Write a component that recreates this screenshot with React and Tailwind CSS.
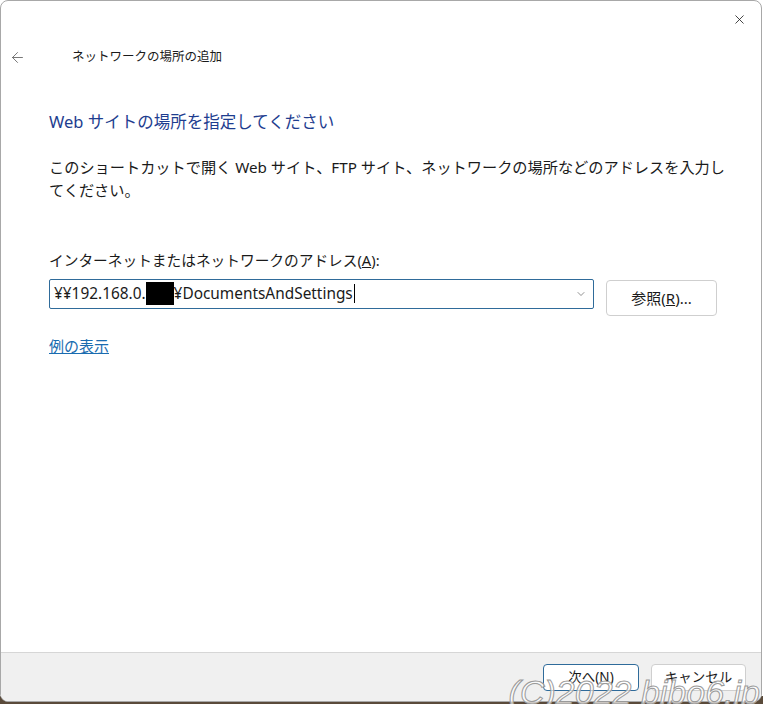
import { X, ArrowLeft, ChevronDown } from 'lucide-react';

const font = "font-['Segoe_UI','Noto_Sans','Noto_Sans_CJK_JP',sans-serif]";

const App = () => {
  return (
    <div className={`relative w-[763px] h-[704px] bg-white overflow-hidden ${font}`}>
      <div className="absolute left-0 right-0 bottom-0 h-[8px] bg-[#5a4a3a]" />
      <div className="relative w-[762px] h-[702px] border border-[#a8a8a8] rounded-[8px] overflow-hidden flex flex-col bg-white">
        {/* title bar */}
        <div className="h-[37px] flex justify-end items-center pr-[14px]">
          <X size={15} strokeWidth={1.3} className="text-[#1a1a1a]" />
        </div>
        <div className="h-[38px] flex items-center">
          <ArrowLeft size={17} strokeWidth={1.2} className="ml-[8px] text-[#606060]" />
          <span className="ml-[46px] text-[12.5px] text-[#1a1a1a]">ネットワークの場所の追加</span>
        </div>

        {/* content */}
        <div className="flex-1 pl-[48px]">
          <h1 className="mt-[34px] text-[16.5px] leading-[24px] text-[#1e3d8f]">Web サイトの場所を指定してください</h1>
          <p className="mt-[22px] text-[15.2px] leading-[23px] text-[#1a1a1a] whitespace-nowrap">
            このショートカットで開く Web サイト、FTP サイト、ネットワークの場所などのアドレスを入力し
            <br />
            てください。
          </p>
          <div className="mt-[48px] text-[14.7px] leading-[20px] text-[#1a1a1a]">
            インターネットまたはネットワークのアドレス(<span className="underline">A</span>):
          </div>
          <div className="mt-[9px] flex items-start">
            <div className="w-[545px] h-[30px] border border-[#2f6b9a] rounded-[2px] flex items-center pl-[4px] pr-[6px]">
              <span className="text-[15.4px] text-[#1a1a1a] whitespace-nowrap flex items-center">
                ¥¥192.168.0.
                <span className="inline-block w-[28px] h-[23px] bg-black" />
                ¥DocumentsAndSettings
                <span className="inline-block w-px h-[19px] bg-black ml-[1px]" />
              </span>
              <ChevronDown size={12} strokeWidth={1.3} className="ml-auto text-[#555]" />
            </div>
            <button className="ml-[12px] mt-[1px] w-[111px] h-[36px] bg-white border border-[#cfcfcf] rounded-[4px] text-[15px] text-[#1a1a1a]">
              参照(<span className="underline">R</span>)...
            </button>
          </div>
          <a className="mt-[20px] inline-block text-[15px] leading-[20px] text-[#1a6cb0] underline">例の表示</a>
        </div>

        {/* footer */}
        <div className="h-[49px] bg-[#f0f0f0] border-t border-[#d6d6d6] flex justify-end items-start pt-[11px] pr-[15px] gap-[12px]">
          <button className="w-[96px] h-[27px] bg-white border border-[#2f6b9a] rounded-[4px] text-[13.5px] text-[#1a1a1a]">
            次へ(<span className="underline">N</span>)
          </button>
          <button className="w-[95px] h-[27px] bg-white border border-[#cfcfcf] rounded-[4px] text-[13.5px] text-[#1a1a1a]">
            キャンセル
          </button>
        </div>
      </div>

      {/* watermark */}
      <div className="absolute right-[3px] bottom-[-5px] text-[34px] italic leading-none text-white/70 [-webkit-text-stroke:1px_#9a9a9a] font-['Liberation_Sans',sans-serif] pointer-events-none">
        (C)2022 bibo6.jp
      </div>
    </div>
  );
};

export default App;
